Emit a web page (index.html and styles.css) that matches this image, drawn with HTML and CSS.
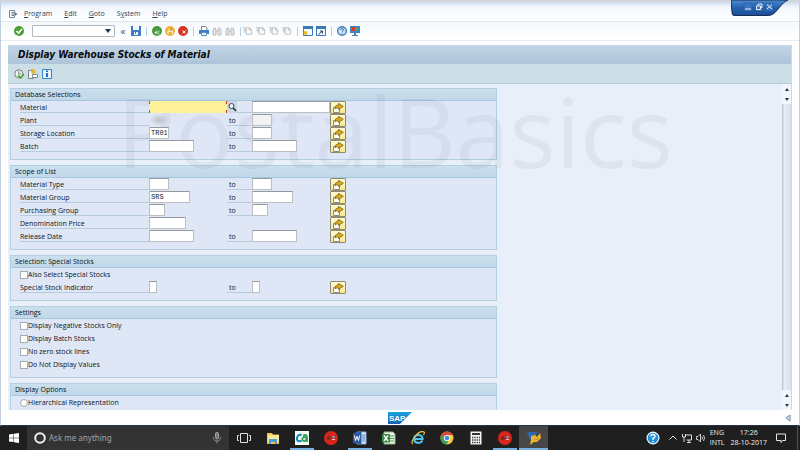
FILE: index.html
```html
<!DOCTYPE html>
<html lang="en">
<head>
<meta charset="utf-8">
<title>Display Warehouse Stocks of Material</title>
<link rel="stylesheet" href="styles.css">
</head>
<body>
<svg class="sprite" aria-hidden="true">
  <symbol id="multi" viewBox="0 0 12 10">
    <path d="M1.500 4.500h6v5h-6z" fill="#fdfdf4" stroke="#8b8c80"/>
    <path d="M3 6c0-3 1-4 3.500-4V.3L11.300 3.300 6.500 6.500V5C5 4.800 4 5 3 6z" fill="#dba91e" stroke="#6d5a1e" stroke-width=".7"/>
  </symbol>
  <symbol id="page" viewBox="0 0 11 10">
    <path d="M3.500 1.500h4l2 2v5h-6z" fill="#fafafa" stroke="#b9bdc0"/>
    <path d="M7 1.500v2.500h2.500M0 1.500h4M2 3v4M.5 4.500L2 3l1.500 1.500" fill="none" stroke="#b4b8bb"/>
  </symbol>
  <symbol id="find" viewBox="0 0 10 10">
    <path d="M1 9V5l1-3h1.500l.5 3v4zM6 9V5l.5-3H8l1 3v4zM4 5h2" fill="#e4e6e7" stroke="#b9bcbe"/>
  </symbol>
  <symbol id="redball" viewBox="0 0 14 14">
    <circle cx="7" cy="7" r="7" fill="#d9261c"/>
    <circle cx="4.800" cy="7" r="2" fill="#742b2c"/><circle cx="9.500" cy="6" r="1.200" fill="#4fb3d8"/><path d="M8 8.500h3" stroke="#f2c9c0"/>
  </symbol>
</svg>

<div class="window">
  <header class="menubar">
    <svg class="menu-icon" viewBox="0 0 10 10"><path d="M6.500 3V1.500h-5v7h5V7M3.500 3.500h3M3.500 5h3M3.500 6.500h3" fill="none" stroke="#6f8596"/><path d="M6.500 3l3 2-3 2z" fill="#52687a"/></svg>
    <nav class="menus">
      <a href="#"><u>P</u>rogram</a><a href="#"><u>E</u>dit</a><a href="#"><u>G</u>oto</a><a href="#">S<u>y</u>stem</a><a href="#"><u>H</u>elp</a>
    </nav>
    <svg class="caption" viewBox="0 0 58 17">
      <defs><linearGradient id="cap" x1="0" y1="0" x2="0" y2="1"><stop offset="0" stop-color="#4d8bd2"/><stop offset=".5" stop-color="#2460b0"/><stop offset="1" stop-color="#1b4d97"/></linearGradient></defs>
      <path d="M0 0h57C50 3 47 11 42 14q-2 1.500-5 1.500H3q-2 0-2-3z" fill="url(#cap)" stroke="#1c2c50"/>
      <path d="M13 3h8v8h-8zM24 3h8v8h-8zM34.500 3h8v8h-8z" fill="#3b73bd" stroke="#255797" stroke-width=".6"/>
      <path d="M14 9h6M25.500 6h4v3.500h-4zM27 6V4h4v3.500h-1.500M36 4.500l5 4.500M41 4.500l-5 4.500" fill="none" stroke="#e4effa"/>
    </svg>
  </header>

  <div class="toolbar">
    <button class="tool" aria-label="Enter"><svg viewBox="0 0 10 10"><circle cx="5" cy="5" r="5" fill="#4aa034"/><path d="M2.500 5l2 2 3.500-4" fill="none" stroke="#fff" stroke-width="1.600"/></svg></button>
    <select class="command" aria-label="Command field"><option></option></select>
    <button class="back" aria-label="Collapse">«</button>
    <button class="tool" aria-label="Save"><svg viewBox="0 0 10 10"><path d="M0 0h10v10H0z" fill="#3c7dbd"/><path d="M2 0h6v4H2zM3 6h4v3H3z" fill="#f0f7fd"/><path d="M4 6h1v2H4z" fill="#3c7dbd"/></svg></button>
    <span class="sep"></span>
    <div class="set">
      <button class="tool" aria-label="Back"><svg viewBox="0 0 10 10"><circle cx="5" cy="5" r="5" fill="#439b3b"/><path d="M5 4.500L3 6.500l2 2M3 6.500h2M7.500 5a1.500 1.500 0 1 0 0 3" fill="none" stroke="#e9f6e4"/></svg></button>
      <button class="tool" aria-label="Exit"><svg viewBox="0 0 10 10"><circle cx="5" cy="5" r="5" fill="#edb335"/><path d="M3 8V5l2-2.500L7.500 5v3M4 5.500h2" fill="none" stroke="#fff8e3"/><circle cx="6" cy="3" r="1" fill="#d67134"/></svg></button>
      <button class="tool" aria-label="Cancel"><svg viewBox="0 0 10 10"><circle cx="5" cy="5" r="5" fill="#d63526"/><path d="M4.500 4.500l3 3M7.500 4.500l-3 3" stroke="#fff"/></svg></button>
    </div>
    <span class="sep"></span>
    <div class="set">
      <button class="tool" aria-label="Print"><svg viewBox="0 0 10 10"><path d="M2.500 4V.5h4L8 2v2" fill="#fff" stroke="#78818a"/><path d="M0 4h10v4H0z" fill="#3d7fc2"/><path d="M2.500 6.500h5v3h-5z" fill="#e8f2fb" stroke="#5d8fbe"/></svg></button>
      <button class="tool" aria-label="Find"><svg><use href="#find"/></svg></button>
      <button class="tool" aria-label="Find next"><svg><use href="#find"/></svg></button>
    </div>
    <span class="sep"></span>
    <div class="set pages">
      <button class="tool" aria-label="First page"><svg><use href="#page"/></svg></button>
      <button class="tool" aria-label="Previous page"><svg><use href="#page"/></svg></button>
      <button class="tool" aria-label="Next page"><svg><use href="#page"/></svg></button>
      <button class="tool" aria-label="Last page"><svg><use href="#page"/></svg></button>
    </div>
    <span class="sep"></span>
    <div class="set">
      <button class="tool" aria-label="New session"><svg viewBox="0 0 10 10"><path d="M.5.500h9v9h-9z" fill="#f4f9fd" stroke="#3d79b4"/><path d="M0 0h10v3H0z" fill="#3d79b4"/><circle cx="2.500" cy="7" r="2" fill="#f2b51c"/></svg></button>
      <button class="tool" aria-label="Shortcut"><svg viewBox="0 0 10 10"><path d="M.5.500h9v9h-9z" fill="#f4f9fd" stroke="#3d79b4"/><path d="M0 0h10v3H0z" fill="#3d79b4"/><path d="M2.500 8.500L6 5.500M4 5h2.500v2.500" fill="none" stroke="#25425e"/></svg></button>
    </div>
    <span class="sep"></span>
    <div class="set">
      <button class="tool" aria-label="Help"><svg viewBox="0 0 10 10"><circle cx="5" cy="5" r="4.300" fill="#cfe3f4" stroke="#3e7eba" stroke-width="1.400"/><path d="M3.500 4q0-1.500 1.500-1.500t1.500 1.300Q6.500 4.800 5 5.500M5 6.800v1" fill="none" stroke="#3370ac"/></svg></button>
      <button class="tool" aria-label="Customize layout"><svg viewBox="0 0 10 10"><path d="M0 0h10v7H0z" fill="#3b86cf"/><path d="M2 1h3v4H2z" fill="#d93c2e"/><path d="M5 1h3v4H5z" fill="#4fa64a"/><path d="M4 7h2v2H4zM2 9h6v1H2z" fill="#4d7eae"/></svg></button>
    </div>
  </div>

  <main class="screen">
    <h1>Display Warehouse Stocks of Material</h1>
    <div class="actions">
      <button class="tool" aria-label="Execute"><svg viewBox="0 0 10 10"><circle cx="4.800" cy="4.800" r="4" fill="#f3f6f2" stroke="#717c7b"/><path d="M4.800 2v3H7" fill="none" stroke="#717c7b"/><path d="M4 6l2.500 3L10 5" fill="none" stroke="#49a22f" stroke-width="1.600"/></svg></button>
      <button class="tool" aria-label="Get variant"><svg viewBox="0 0 10 10"><path d="M.5 1.500h5v8h-5z" fill="#f5f5ed" stroke="#7b8586"/><path d="M3 0h3l2 3-3 2-2-2z" fill="#e7b630"/><path d="M4.500 5.500h5v3h-5z" fill="#fff" stroke="#7f8a8e"/></svg></button>
      <button class="tool" aria-label="Information"><svg viewBox="0 0 10 10"><path d="M.5.500h9v9h-9z" fill="#e5f2fc" stroke="#2f85cf"/><path d="M4 1.500h2v1.500H4zM4 4h2v4H4z" fill="#1d6fbd"/></svg></button>
    </div>

    <div class="content">
      <div class="groups">
        <section class="group">
          <h2>Database Selections</h2>
          <div class="rows">
            <div class="row"><label for="f1">Material</label><span class="cell"><input id="f1" class="w77 focus"><button class="search" aria-label="Search help"><svg viewBox="0 0 10 10"><circle cx="4.500" cy="4" r="2.500" fill="#eaf3fb" stroke="#3c4650"/><path d="M6.200 6L9 9" stroke="#27313a" stroke-width="1.600"/></svg></button></span><span class="rule"></span><span class="cell"><input class="w77" aria-label="Material to"></span><button class="multi" aria-label="Multiple selection"><svg><use href="#multi"/></svg></button></div>
            <div class="row"><label for="f2">Plant</label><span class="cell"><input id="f2" class="w20 masked"></span><label class="to" for="t2">to</label><span class="cell"><input id="t2" class="w20 dim"></span><button class="multi" aria-label="Multiple selection"><svg><use href="#multi"/></svg></button></div>
            <div class="row"><label for="f3">Storage Location</label><span class="cell"><input id="f3" class="w20" value="TR01"></span><label class="to" for="t3">to</label><span class="cell"><input id="t3" class="w20"></span><button class="multi" aria-label="Multiple selection"><svg><use href="#multi"/></svg></button></div>
            <div class="row"><label for="f4">Batch</label><span class="cell"><input id="f4" class="w45"></span><label class="to" for="t4">to</label><span class="cell"><input id="t4" class="w45"></span><button class="multi" aria-label="Multiple selection"><svg><use href="#multi"/></svg></button></div>
          </div>
        </section>

        <section class="group">
          <h2>Scope of List</h2>
          <div class="rows">
            <div class="row"><label for="f5">Material Type</label><span class="cell"><input id="f5" class="w20"></span><label class="to" for="t5">to</label><span class="cell"><input id="t5" class="w20"></span><button class="multi" aria-label="Multiple selection"><svg><use href="#multi"/></svg></button></div>
            <div class="row"><label for="f6">Material Group</label><span class="cell"><input id="f6" class="w41" value="SRS"></span><label class="to" for="t6">to</label><span class="cell"><input id="t6" class="w41"></span><button class="multi" aria-label="Multiple selection"><svg><use href="#multi"/></svg></button></div>
            <div class="row"><label for="f7">Purchasing Group</label><span class="cell"><input id="f7" class="w16"></span><label class="to" for="t7">to</label><span class="cell"><input id="t7" class="w16"></span><button class="multi" aria-label="Multiple selection"><svg><use href="#multi"/></svg></button></div>
            <div class="row"><label for="f8">Denomination Price</label><span class="cell"><input id="f8" class="w37"></span><span></span><span></span><button class="multi" aria-label="Multiple selection"><svg><use href="#multi"/></svg></button></div>
            <div class="row"><label for="f9">Release Date</label><span class="cell"><input id="f9" class="w45"></span><label class="to" for="t9">to</label><span class="cell"><input id="t9" class="w45"></span><button class="multi" aria-label="Multiple selection"><svg><use href="#multi"/></svg></button></div>
          </div>
        </section>

        <section class="group">
          <h2>Selection: Special Stocks</h2>
          <div class="rows">
            <label class="check"><input type="checkbox">Also Select Special Stocks</label>
            <div class="row"><label for="f10">Special Stock Indicator</label><span class="cell"><input id="f10" class="w8"></span><label class="to" for="t10">to</label><span class="cell"><input id="t10" class="w8"></span><button class="multi" aria-label="Multiple selection"><svg><use href="#multi"/></svg></button></div>
          </div>
        </section>

        <section class="group">
          <h2>Settings</h2>
          <div class="rows">
            <label class="check"><input type="checkbox">Display Negative Stocks Only</label>
            <label class="check"><input type="checkbox">Display Batch Stocks</label>
            <label class="check"><input type="checkbox">No zero stock lines</label>
            <label class="check"><input type="checkbox">Do Not Display Values</label>
          </div>
        </section>

        <section class="group">
          <h2>Display Options</h2>
          <div class="rows">
            <label class="check"><input type="radio" name="view">Hierarchical Representation</label>
          </div>
        </section>
      </div>
      <div class="scrollbar">
        <span class="arrow up"></span><span class="arrow down"></span>
        <span class="track"></span>
        <span class="arrow up"></span><span class="arrow down"></span>
      </div>
      <div class="watermark">PostalBasics</div>
    </div>
  </main>

  <footer class="status">
    <svg class="sap" viewBox="0 0 24 12" role="img" aria-label="SAP">
      <defs><linearGradient id="sapg" x1="0" y1="0" x2="0" y2="1"><stop offset="0" stop-color="#19a4e4"/><stop offset="1" stop-color="#1660b4"/></linearGradient></defs>
      <path d="M0 0h24L12 12H0z" fill="url(#sapg)"/><text x="1" y="9" class="sap-text">SAP</text>
    </svg>
    <svg class="grip" viewBox="0 0 6 8"><path d="M5 1v6L1 4z" fill="#d7e4f1" stroke="#6b86a8"/></svg>
  </footer>
</div>

<div class="taskbar">
  <button class="start" aria-label="Start"><svg viewBox="0 0 10 10"><path d="M0 1.400L4.500.8v3.900H0zM5 .7L10 0v4.700H5zM0 5.200h4.500v3.900L0 8.500zM5 5.200h5V10l-5-.7z" fill="#fff"/></svg></button>
  <div class="cortana">
    <svg class="ring" viewBox="0 0 12 12"><circle cx="6" cy="6" r="4.800" fill="none" stroke="#f2f2f2" stroke-width="2"/></svg>
    <input class="ask" placeholder="Ask me anything" aria-label="Ask me anything">
    <svg class="mic" viewBox="0 0 8 12"><rect x="2.500" y=".5" width="3" height="6.500" rx="1.500" fill="#777" stroke="#a5a5a5"/><path d="M.5 5v1.500Q1 9 4 9t3.500-2.500V5M4 9v2.500" fill="none" stroke="#8a8a8a"/></svg>
  </div>
  <div class="apps">
    <button aria-label="Task view"><svg viewBox="0 0 14 14"><path d="M3.500 2.500h7v9h-7zM2 4.500H.5v5H2M12 4.500h1.500v5H12" fill="none" stroke="#e1e1e1"/></svg></button>
    <button aria-label="File Explorer"><svg viewBox="0 0 14 14"><path d="M1 2h5l1 1.500h6V13H1z" fill="#efc64f"/><path d="M2 4h11v7H2z" fill="#fbe695"/><path d="M3 8h8v5H9v-2H5v2H3z" fill="#46a1d9"/></svg></button>
    <button class="open" aria-label="CA"><svg viewBox="0 0 14 14"><path d="M0 0h14v14H0z" fill="#f5faf6"/><path d="M6.500 4.500Q5.500 3.500 4 4T2 7t1.500 3 3-.500" fill="none" stroke="#1689bb" stroke-width="2"/><circle cx="9.300" cy="8" r="2" fill="none" stroke="#36a05a" stroke-width="1.800"/><path d="M8 4.500q4-1.500 4 1.500v5" fill="none" stroke="#36a05a" stroke-width="1.800"/></svg></button>
    <button aria-label="Browser"><svg><use href="#redball"/></svg></button>
    <button class="open" aria-label="Word"><svg viewBox="0 0 14 14"><path d="M4 1h9v12H4z" fill="#e9f0fa" stroke="#87a8d8"/><path d="M9 4h3M9 6h3M9 8h3M9 10h3" stroke="#4372b5"/><path d="M0 2l8.500-1.500v13L0 12z" fill="#2c5ba6"/><path d="M1.500 4.500l1 5 1.500-4 1.500 4 1-5" fill="none" stroke="#fff"/></svg></button>
    <button aria-label="Excel"><svg viewBox="0 0 14 14"><path d="M2 1h9l2 2v10H2z" fill="#edf5e9" stroke="#8fb486"/><path d="M8 5h4M8 7.500h4M8 10h4" stroke="#50944b"/><path d="M0 3h8v8.500H0z" fill="#3c8b43"/><path d="M2 4.500l4 5.500M6 4.500L2 10" stroke="#fff" stroke-width="1.300"/></svg></button>
    <button aria-label="Internet Explorer"><svg viewBox="0 0 14 14"><path d="M11.500 9.500Q10 12 7.500 12 3 11.500 3 8q.500-4 4.500-4 4 .2 4 4H4" fill="none" stroke="#4ec4f2" stroke-width="2.200"/><path d="M2 13Q-1 12 4 5.500T13 1q1 .5-.5 3" fill="none" stroke="#f2c33b" stroke-width="1.200"/></svg></button>
    <button aria-label="Chrome"><svg viewBox="0 0 14 14"><circle cx="7" cy="7" r="6.500" fill="#f4cd3c"/><path d="M1.400 3.800A6.500 6.500 0 0 1 12.800 4H7L4.500 8.500z" fill="#dc493a"/><path d="M1.400 3.800A6.500 6.500 0 0 0 6.500 13.500L9 8.500H4.500z" fill="#38a257"/><circle cx="7" cy="7" r="3.100" fill="#fff"/><circle cx="7" cy="7" r="2.300" fill="#4687e6"/></svg></button>
    <button aria-label="Calculator"><svg viewBox="0 0 14 14"><path d="M1.500.500h11v13h-11z" fill="#f4f4f4"/><path d="M3 2h8v2H3z" fill="#333"/><path d="M3 6.500h8M3 9h8M3 11.500h8" stroke="#333" stroke-width="1.300" stroke-dasharray="1.300 1"/></svg></button>
    <button class="open" aria-label="Browser"><svg><use href="#redball"/></svg></button>
    <button class="open active" aria-label="SAP Logon"><svg viewBox="0 0 14 14"><path d="M0 1h10L8 6l-5 3z" fill="#2c69b0"/><path d="M4 5l4-1 2 2 3-4 1 5-4 4H7l-4 3 1-5z" fill="#edb52f"/><path d="M7 8l2 1 3-2" fill="none" stroke="#c48d20"/></svg></button>
  </div>
  <div class="tray">
    <svg class="help" viewBox="0 0 14 14"><circle cx="7" cy="7" r="6.500" fill="#f3f9fd"/><circle cx="7" cy="7" r="5.300" fill="#1c8fdc"/><path d="M5 5.500Q5 3.500 7 3.500t2 1.700Q9 6.500 7 7.500V9M7 10v1.300" fill="none" stroke="#fff" stroke-width="1.400"/></svg>
    <svg class="small" viewBox="0 0 10 10"><path d="M1.500 6.500L5 3l3.500 3.500" fill="none" stroke="#e6e6e6"/></svg>
    <svg class="small" viewBox="0 0 10 10"><path d="M3.500 2h6v5h-5M5 9.500h4M7 7v2M.5 1v3h3V1M2 4v5" fill="none" stroke="#ddd"/></svg>
    <svg class="small" viewBox="0 0 10 10"><path d="M.5 3.500H2L4.500 1v8L2 6.500H.5zM6 3.500q1 1.500 0 3M7.500 2q2 3 0 6" fill="none" stroke="#ddd" stroke-width=".9"/></svg>
    <span class="lang">ENG<br>INTL</span>
    <span class="clock">17:26<br>28-10-2017</span>
    <svg class="small" viewBox="0 0 10 10"><path d="M.5 1h9v6.500h-3L5 9.500V7.500H.5z" fill="none" stroke="#e8e8e8"/></svg>
    <span class="peek"></span>
  </div>
</div>
</body>
</html>
```
FILE: styles.css
```css
* { box-sizing: border-box; }

body {
  margin: 0;
  height: 100vh;
  display: flex;
  flex-direction: column;
  overflow: hidden;
  font: 7px/10px "Open Sans", "Noto Sans", sans-serif;
  color: #0a1117;
}

button { padding: 0; border: 0; background: none; font: inherit; color: inherit; }
svg { display: block; flex: none; }
.sprite { position: absolute; width: 0; height: 0; }

/* Window frame */
.window {
  flex: 1;
  min-height: 0;
  display: flex;
  flex-direction: column;
  background: #fff;
  border: 1px solid #c2d0de;
  border-top: 2px solid #cfd6dd;
  border-bottom: 1px solid #26324f;
}

.menubar {
  position: relative;
  flex: none;
  height: 20px;
  display: flex;
  align-items: center;
  gap: 6px;
  padding: 4px 7px 0;
  background: linear-gradient(#cddcf0, #f2f6fc 5px, #fff);
  border-bottom: 1px solid #dbe6ee;
}
.menu-icon { width: 10px; height: 10px; }
.menus { display: flex; gap: 12px; }
.menus a { color: #2f465a; text-decoration: none; }
.caption { position: absolute; top: -2px; right: 10px; width: 58px; height: 17px; }

.toolbar {
  flex: none;
  height: 19px;
  display: flex;
  align-items: center;
  gap: 5px;
  padding: 0 13px;
  background: linear-gradient(#f5f9fc, #fff);
  border-bottom: 1px solid #e2edf3;
}
.tool { flex: none; width: 10px; height: 10px; }
.tool svg { width: 10px; height: 10px; }
.back { width: 6px; color: #42586a; font-size: 10px; }
.command {
  width: 83px;
  height: 12px;
  margin-left: 3px;
  border: 1px solid #b0b8bf;
  border-radius: 1px;
  appearance: none;
  background: #fff url("data:image/svg+xml,%3Csvg xmlns='http://www.w3.org/2000/svg' viewBox='0 0 6 4'%3E%3Cpath d='M0 0h6L3 4z' fill='%231c3450'/%3E%3C/svg%3E") no-repeat right 3px center / 6px 4px;
}
.set { display: flex; gap: 3px; }
.pages { margin-left: -3px; }
.sep { width: 1px; height: 9px; background: #b4cfe3; }

/* Transaction screen */
.screen {
  flex: 1;
  min-height: 0;
  margin: 4px 7px 0;
  display: flex;
  flex-direction: column;
  border-right: 1px solid #cbdae6;
}
h1 {
  flex: none;
  margin: 0;
  padding-left: 10px;
  font: italic bold 10px/19px "DejaVu Sans Condensed", "DejaVu Sans", sans-serif;
  color: #060b10;
  background: linear-gradient(#c3d5e5, #aec4da);
}
.actions {
  flex: none;
  height: 20px;
  display: flex;
  align-items: center;
  gap: 4px;
  padding: 0 6px;
  background: #cddfe6;
  border-bottom: 1px solid #b1cbdc;
}

.content {
  position: relative;
  flex: 1;
  min-height: 0;
  display: flex;
  justify-content: space-between;
  overflow: hidden;
  background: #e8eff9;
}
.groups {
  flex: 0 1 489px;
  display: flex;
  flex-direction: column;
  gap: 5px;
  padding: 4px 0 0 2px;
}
.group {
  flex: none;
  background: #dfe7f7;
  border: 1px solid #b4cfe1;
}
h2 {
  margin: 0;
  padding-left: 4px;
  font: inherit;
  line-height: 11px;
  background: linear-gradient(#cbdfec, #c1d8e8);
  border-bottom: 1px solid #a4c6df;
}
.rows { padding: 0 8px 6px 9px; }

.row {
  display: grid;
  grid-template-columns: 129px 78px 25px 78px 16px;
  height: 13px;
  align-items: start;
}
.row label, .rule {
  height: 12px;
  line-height: 13px;
  border-bottom: 1px solid #b5ccdb;
}
.row .to { padding-left: 2px; }
.cell { display: flex; }

/* Fields and buttons stay clear of the watermark */
.cell, .multi { position: relative; z-index: 1; }

.cell input {
  height: 12px;
  padding: 0 1px;
  border: 1px solid #bcbfc2;
  border-top-color: #94999e;
  background: #fff;
  font: 7px/10px "Liberation Mono", monospace;
  color: #222;
}
.cell .focus {
  --c: linear-gradient(#d2402c, #d2402c) no-repeat;
  border: 0;
  background:
    var(--c) 0 0 / 1px 3px, var(--c) 0 100% / 1px 3px,
    var(--c) 100% 0 / 1px 3px, var(--c) 100% 100% / 1px 3px,
    #fdf19a;
}
.cell .dim { background: #f2f2f3; }
.cell .masked {
  border: 0;
  background: radial-gradient(closest-side, #bfc0c6, transparent);
}
.w8 { width: 8px; }
.w16 { width: 16px; }
.w20 { width: 20px; }
.w37 { width: 37px; }
.w41 { width: 41px; }
.w45 { width: 45px; }
.w77 { width: 78px; }
.search {
  flex: none;
  width: 10px;
  height: 12px;
  background: #cbd6e2;
}
.search svg { width: 10px; height: 10px; }
.multi {
  width: 16px;
  height: 13px;
  display: flex;
  align-items: center;
  justify-content: center;
  background: linear-gradient(#fffbd0, #f8e88c);
  border: 1px solid #8f8a70;
  border-radius: 1px;
}
.multi svg { width: 12px; height: 10px; }

.check {
  display: flex;
  align-items: center;
  height: 13px;
}
.check input {
  flex: none;
  appearance: none;
  width: 8px;
  height: 8px;
  margin: 0;
  border: 1px solid #a6acb2;
  background: #fff;
}
.check input[type="radio"] { border-radius: 50%; }

.scrollbar {
  flex: none;
  width: 9px;
  display: flex;
  flex-direction: column;
  align-items: center;
  background: #f1f6fc;
}
.arrow { flex: none; height: 10px; display: flex; align-items: center; }
.arrow::before { content: ""; border: 2px solid transparent; }
.up::before { border-bottom: 3px solid #25364a; border-top: 0; }
.down::before { border-top: 3px solid #25364a; border-bottom: 0; }
.track {
  flex: 1;
  align-self: stretch;
  background: linear-gradient(90deg, #bccbdc 1px, #e9f0f9 2px, #d3deed);
}

.watermark {
  position: absolute;
  top: -9px;
  left: 109px;
  font: 97px/110px "Open Sans", sans-serif;
  color: rgba(90, 100, 130, .08);
  pointer-events: none;
}

.status {
  position: relative;
  flex: none;
  height: 15px;
  display: flex;
  align-items: center;
  justify-content: center;
}
.sap { width: 24px; height: 12px; }
.sap-text { font: bold 8px "Liberation Sans", sans-serif; fill: #fff; }
.grip { position: absolute; right: 8px; width: 6px; height: 8px; }

/* Desktop taskbar */
.taskbar {
  flex: none;
  height: 24px;
  display: flex;
  background: #1f1f1f;
  color: #f0f0f0;
}
.start { width: 27px; display: flex; align-items: center; justify-content: center; }
.start svg { width: 10px; height: 10px; }
.cortana {
  flex: 0 1 202px;
  display: flex;
  align-items: center;
  gap: 3px;
  padding: 0 8px 0 7px;
  background: #333;
}
.ring { width: 12px; height: 12px; }
.ask {
  flex: 1;
  min-width: 0;
  padding: 0;
  border: 0;
  background: none;
  font: 8px/12px "Noto Sans", sans-serif;
  color: #fff;
}
.ask::placeholder { color: #a3a3a3; }
.mic { width: 8px; height: 12px; }
.apps { display: flex; }
.apps button {
  width: 29px;
  display: flex;
  align-items: center;
  justify-content: center;
}
.apps svg { width: 14px; height: 14px; }
.apps .open { background: linear-gradient(#76b0e0, #76b0e0) no-repeat center bottom / 24px 2px; }
.apps .active { background-color: #474747; background-size: 29px 2px; }
.tray {
  margin-left: auto;
  display: flex;
  align-items: center;
  gap: 4px;
  font: 7px/10px "Open Sans", sans-serif;
}
.help { width: 14px; height: 14px; margin-right: 4px; }
.small { width: 10px; height: 10px; }
.lang { margin-right: 2px; text-align: left; }
.clock { margin-right: 5px; text-align: center; }
.peek { align-self: stretch; width: 1px; margin: 0 2px 0 7px; background: #555; }
```
